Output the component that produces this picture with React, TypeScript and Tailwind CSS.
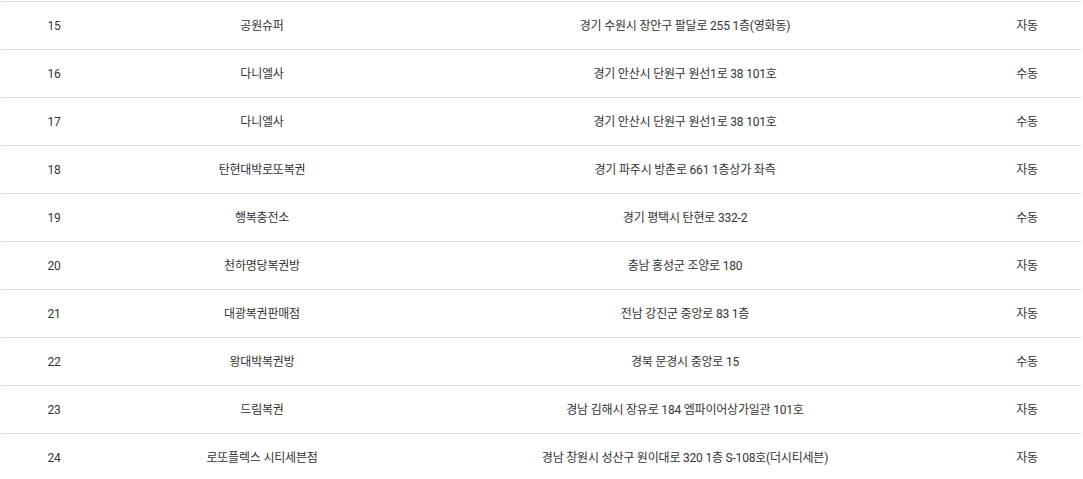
const rows = [
	{ no: 15, name: "공원슈퍼", address: "경기 수원시 장안구 팔달로 255 1층(영화동)", kind: "자동" },
	{ no: 16, name: "다니엘사", address: "경기 안산시 단원구 원선1로 38 101호", kind: "수동" },
	{ no: 17, name: "다니엘사", address: "경기 안산시 단원구 원선1로 38 101호", kind: "수동" },
	{ no: 18, name: "탄현대박로또복권", address: "경기 파주시 방촌로 661 1층상가 좌측", kind: "자동" },
	{ no: 19, name: "행복충전소", address: "경기 평택시 탄현로 332-2", kind: "수동" },
	{ no: 20, name: "천하명당복권방", address: "충남 홍성군 조양로 180", kind: "자동" },
	{ no: 21, name: "대광복권판매점", address: "전남 강진군 중앙로 83 1층", kind: "자동" },
	{ no: 22, name: "왕대박복권방", address: "경북 문경시 중앙로 15", kind: "수동" },
	{ no: 23, name: "드림복권", address: "경남 김해시 장유로 184 엠파이어상가일관 101호", kind: "자동" },
	{ no: 24, name: "로또플렉스 시티세븐점", address: "경남 창원시 성산구 원이대로 320 1층 S-108호(더시티세븐)", kind: "자동" },
];

export default function App() {
	return (
		<div className="min-h-screen bg-white px-[1px] pt-[1px] font-['Roboto','Noto_Sans_CJK_KR',sans-serif] text-[12px] tracking-[-0.2px] text-[#333]">
			<div className="w-[1080px] border-t border-[#dddddd]">
				{rows.map((row) => (
					<div
						key={row.no}
						className="grid h-[48px] grid-cols-[106px_310px_536px_128px] items-center border-b border-[#dddddd] text-center"
					>
						<div>{row.no}</div>
						<div>{row.name}</div>
						<div>{row.address}</div>
						<div className="pl-[20px]">{row.kind}</div>
					</div>
				))}
			</div>
		</div>
	);
}
